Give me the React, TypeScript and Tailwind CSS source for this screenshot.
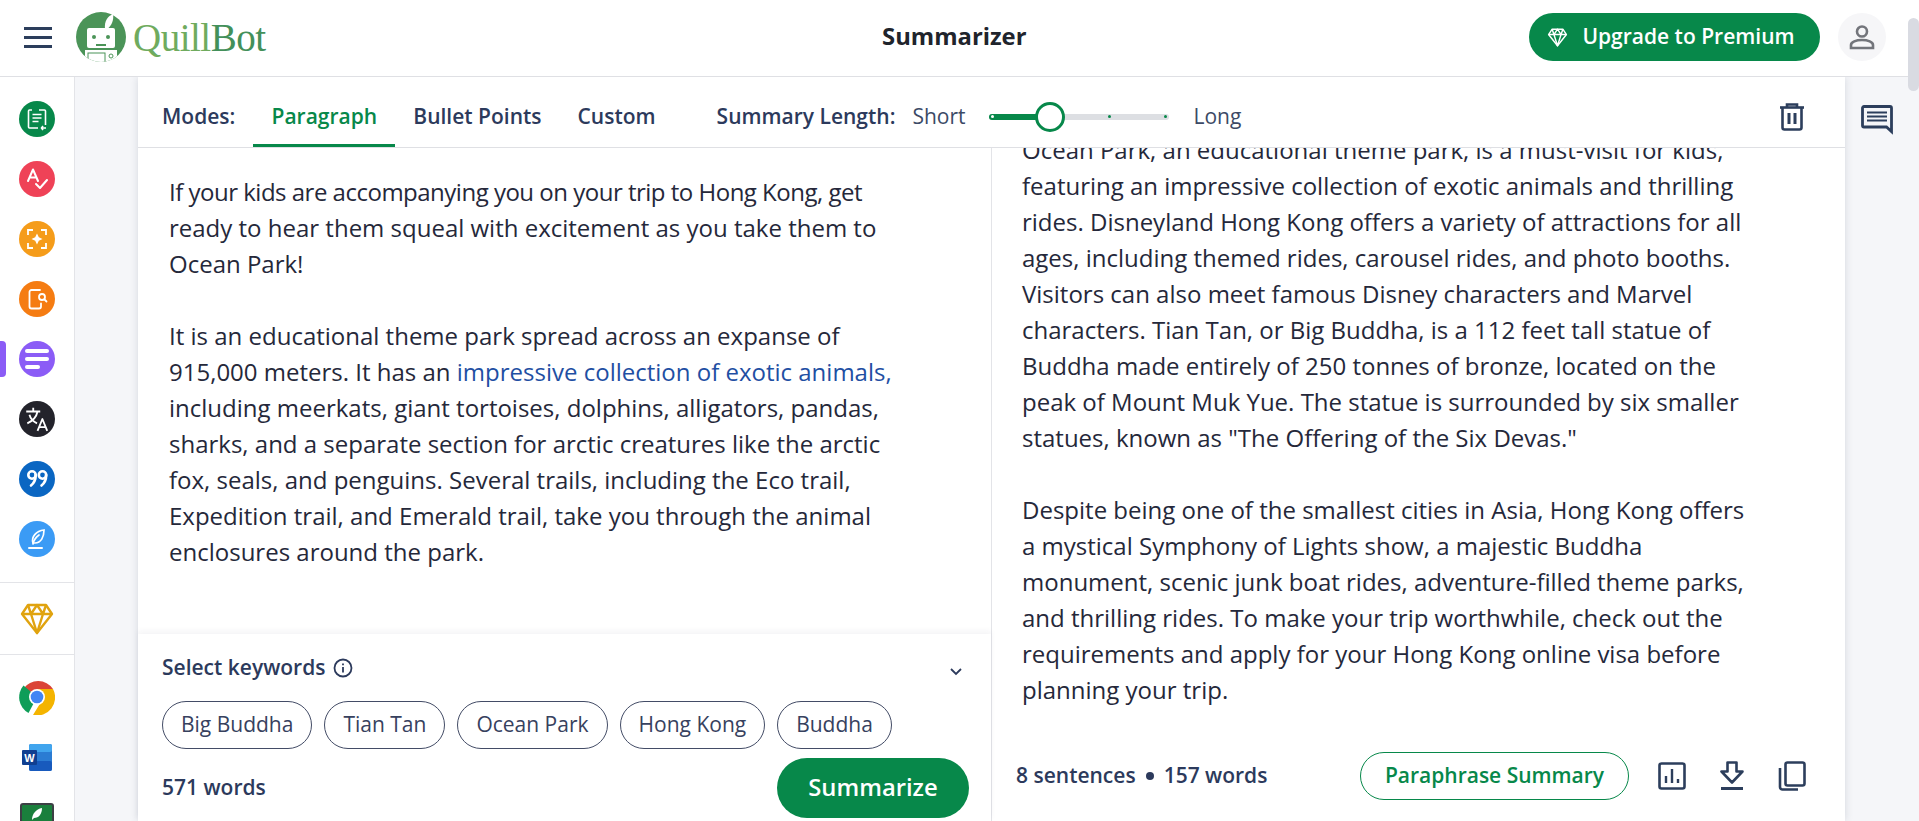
import type { ReactNode } from "react";

const GREEN = "#07884a";

function Circle({ color, children }: { color: string; children: ReactNode }) {
  return (
    <div className="flex h-9 w-9 items-center justify-center rounded-full" style={{ backgroundColor: color }}>
      {children}
    </div>
  );
}

function Logo() {
  return (
    <div className="flex items-center">
      <svg width="52" height="52" viewBox="0 0 52 52">
        <defs>
          <clipPath id="logoclip">
            <circle cx="26" cy="26" r="25" />
          </clipPath>
        </defs>
        <circle cx="26" cy="26" r="25" fill="#4b9458" />
        <path d="M30 18C29 10 33 5 38 3c1 5-1 12-6 15z" fill="#fff" />
        <rect x="12" y="17" width="28" height="20" rx="2" fill="#fff" />
        <circle cx="19" cy="26" r="2" fill="#4b9458" />
        <circle cx="33" cy="26" r="2" fill="#4b9458" />
        <g clipPath="url(#logoclip)">
          <rect x="21" y="33" width="10" height="2" fill="#4b9458" />
          <rect x="10" y="39" width="32" height="14" fill="#fff" />
          <rect x="13" y="42" width="17" height="10" fill="none" stroke="#4b9458" strokeWidth="1" />
          <circle cx="36" cy="45" r="2" fill="none" stroke="#4b9458" strokeWidth="1" />
        </g>
      </svg>
      <span className="ml-[6px] font-['Liberation_Serif',serif] text-[39px] leading-none tracking-[-0.5px]">
        <span className="text-[#6fab5e]">Quill</span>
        <span className="text-[#43905a]">Bot</span>
      </span>
    </div>
  );
}

function Sidebar() {
  return (
    <aside className="relative flex w-[75px] shrink-0 flex-col items-center border-r border-[#e3e4e8] bg-white pt-[24px]">
      {/* active marker */}
      <div className="absolute left-0 top-[264px] h-9 w-[6px] rounded-r-[4px] bg-[#8b5cf6]" />
      <div className="flex shrink-0 flex-col gap-[24px]">
        <Circle color="#07884a">
          <svg width="24" height="24" viewBox="0 0 24 24" fill="none" stroke="#fff" strokeWidth="1.6">
            <path d="M7 3H4.500a1 1 0 0 0-1 1v16a1 1 0 0 0 1 1H13M14 3h5.500a1 1 0 0 1 1 1v14" />
            <path d="M7.500 7.500h9M7.500 11h9M7.500 14.500h6" />
            <path d="M17 21h4M18 19l-1.500 2 1.500 2" />
          </svg>
        </Circle>
        <Circle color="#ef4257">
          <svg width="26" height="26" viewBox="0 0 26 26" fill="none" stroke="#fff" strokeWidth="2" strokeLinecap="round" strokeLinejoin="round">
            <path d="M4 15 9 3.500 14 15M5.500 11.500h7" />
            <path d="M12 18l4 4 7-8" />
          </svg>
        </Circle>
        <Circle color="#f59c1a">
          <svg width="24" height="24" viewBox="0 0 24 24" fill="none" stroke="#fff" strokeWidth="1.8">
            <path d="M3 8V3h5M16 3h5v5M21 16v5h-5M8 21H3v-5" />
            <path d="M12 6.500l1.800 3.700 3.700 1.800-3.700 1.800-1.800 3.700-1.800-3.700L6.500 12l3.700-1.800z" fill="#fff" stroke="none" />
          </svg>
        </Circle>
        <Circle color="#f57c12">
          <svg width="24" height="24" viewBox="0 0 24 24" fill="none" stroke="#fff" strokeWidth="1.8" strokeLinecap="round">
            <path d="M15 3H6.500a2 2 0 0 0-2 2v14.500a2 2 0 0 0 2 2h7.500a2 2 0 0 0 2-2v-3" />
            <circle cx="17" cy="10" r="3" />
            <path d="M19.500 12.500l2 2" />
          </svg>
        </Circle>
        <Circle color="#8b5cf6">
          <div className="flex w-[24px] flex-col gap-[4px]">
            <div className="h-[4px] w-[24px] rounded-full bg-white" />
            <div className="h-[4px] w-[24px] rounded-full bg-white" />
            <div className="h-[4px] w-[15px] rounded-full bg-white" />
          </div>
        </Circle>
        <Circle color="#23232b">
          <svg width="28" height="28" viewBox="0 0 26 26" fill="none" stroke="#fff" strokeWidth="1.7" strokeLinejoin="round">
            <path d="M3 6h13M9.500 2.500V6M13.500 6c-1 5-5 9-9.500 11M6 9c1 4 4 6.500 7 8" />
            <path d="M13.500 24l4.500-11 4.500 11M15 20.500h6" />
          </svg>
        </Circle>
        <Circle color="#0a66c2">
          <svg width="26" height="26" viewBox="0 0 26 26" fill="none" stroke="#fff" strokeWidth="2.600" strokeLinecap="round">
            <circle cx="8" cy="9" r="3.700" />
            <path d="M11.700 9c0 5-1.500 8-4.700 10.500" />
            <circle cx="18.500" cy="9" r="3.700" />
            <path d="M22.200 9c0 5-1.500 8-4.700 10.500" />
          </svg>
        </Circle>
        <Circle color="#3b9bf5">
          <svg width="26" height="26" viewBox="0 0 26 26" fill="none" stroke="#fff" strokeWidth="1.7" strokeLinecap="round">
            <path d="M9 17c-2-6 3-12 11-13 0 7-3 13-9 13z" />
            <path d="M9 18c1-5 3-7 6-9" />
            <path d="M5 22h13" strokeWidth="2" />
          </svg>
        </Circle>
      </div>

      <div className="mt-[25px] flex h-[73px] w-full shrink-0 items-center justify-center border-y border-[#e3e4e8]">
        <svg width="34" height="32" viewBox="0 0 34 32" fill="none" stroke="#e0a30f" strokeWidth="2.400" strokeLinejoin="round">
          <path d="M8 2h18l6 9-15 19L2 11z" />
          <path d="M2 11h30M11 11l6 19 6-19M8 2l3 9 6-9 6 9 3-9" />
        </svg>
      </div>

      <div className="mt-[24px] flex shrink-0 flex-col items-center">
        <svg width="36" height="36" viewBox="0 0 36 36">
          <path d="M18 18 4.500 9.500A18 18 0 0 1 34 10H18z" fill="#db4437" />
          <path d="M18 18 9.500 34A18 18 0 0 1 4.500 6.500z" fill="#0f9d58" />
          <path d="M18 10h16A18 18 0 0 1 14 36l8-13z" fill="#f4b400" />
          <circle cx="18" cy="18" r="8" fill="#fff" />
          <circle cx="18" cy="18" r="6.300" fill="#4285f4" />
        </svg>
        <svg className="mt-[29px]" width="30" height="27" viewBox="0 0 30 27">
          <rect x="7" y="0" width="23" height="27" rx="2" fill="#2b7cd3" />
          <rect x="7" y="0" width="23" height="8" rx="2" fill="#41a5ee" />
          <rect x="7" y="17" width="23" height="10" rx="2" fill="#185abd" />
          <rect x="0" y="6" width="15" height="15" rx="1" fill="#103f91" />
          <text x="7.500" y="17.500" textAnchor="middle" fill="#fff" fontSize="11" fontWeight="700" fontFamily="Liberation Sans, sans-serif">
            W
          </text>
        </svg>
        <div className="mt-[32px] flex h-[36px] w-[34px] items-start justify-center rounded-[3px] border-[2px] border-[#3c3f44] bg-[#1a7f3c] pt-[2px]">
          <svg width="14" height="14" viewBox="0 0 14 14" fill="#fff">
            <path d="M2 13C2 7 6 2 12 1c0 6-3 10-8 10z" />
          </svg>
        </div>
      </div>
    </aside>
  );
}

function Header() {
  return (
    <header className="relative flex h-[77px] shrink-0 items-center border-b border-[#dfe0e4] bg-white pb-[2px] pl-[24px] pr-[33px]">
      <div className="flex w-[28px] flex-col gap-[6px]">
        <div className="h-[3px] bg-[#2c3e5c]" />
        <div className="h-[3px] bg-[#2c3e5c]" />
        <div className="h-[3px] bg-[#2c3e5c]" />
      </div>
      <div className="ml-[23px]">
        <Logo />
      </div>
      <div className="flex flex-1 justify-center pl-[114px]">
        <h1 className="text-[23.800px] font-bold text-[#20242c]">Summarizer</h1>
      </div>
      <button className="flex h-[48px] w-[291px] items-center justify-center gap-[14px] rounded-full pr-[7px] text-[21px] font-semibold text-white" style={{ backgroundColor: GREEN }}>
        <svg width="21" height="19" viewBox="0 0 34 32" fill="none" stroke="#fff" strokeWidth="2.400" strokeLinejoin="round">
          <path d="M8 2h18l6 9-15 19L2 11z" />
          <path d="M2 11h30M11 11l6 19 6-19M8 2l3 9 6-9 6 9 3-9" />
        </svg>
        Upgrade to Premium
      </button>
      <div className="ml-[18px] flex h-[48px] w-[48px] items-center justify-center rounded-full bg-[#f6f6f8]">
        <svg width="26" height="26" viewBox="0 0 26 26" fill="none" stroke="#73757b" strokeWidth="2.600">
          <circle cx="13" cy="7.500" r="5" />
          <path d="M2 24v-3c0-3 5-5 11-5s11 2 11 5v3z" />
        </svg>
      </div>
    </header>
  );
}

function Slider() {
  return (
    <div className="relative h-[6px] w-[180px] rounded-full bg-[#dddfe3]">
      <div className="h-[6px] w-[60px] rounded-full" style={{ backgroundColor: GREEN }} />
      <div className="absolute left-[2px] top-[1.500px] h-[3px] w-[3px] rounded-full bg-white" />
      <div className="absolute left-[119px] top-[1.500px] h-[3px] w-[3px] rounded-full bg-[#07884a]" />
      <div className="absolute left-[175px] top-[1.500px] h-[3px] w-[3px] rounded-full bg-[#07884a]" />
      <div className="absolute left-[46px] top-[-12px] h-[30px] w-[30px] rounded-full border-[3px] border-[#07884a] bg-white" />
    </div>
  );
}

function Toolbar() {
  return (
    <div className="flex h-[71px] shrink-0 items-stretch border-b border-[#dfe0e4] pl-[24px] text-[21px]">
      <span className="flex items-center pt-[9px] font-semibold text-[#2c3a5c]">Modes:</span>
      <span className="ml-[18px] flex w-[142px] items-center justify-center border-b-[3px] border-[#07884a] pt-[12px] font-semibold text-[#07884a]">Paragraph</span>
      <span className="ml-[18px] flex items-center pt-[9px] font-semibold text-[#2c3a5c]">Bullet Points</span>
      <span className="ml-[36px] flex items-center pt-[9px] font-semibold text-[#2c3a5c]">Custom</span>
      <span className="ml-[61px] flex items-center pt-[9px] font-semibold text-[#2c3a5c]">Summary Length:</span>
      <span className="ml-[17px] flex items-center pt-[9px] text-[#3c4a66]">Short</span>
      <div className="ml-[23px] flex items-center pt-[9px]">
        <Slider />
      </div>
      <span className="ml-[25px] flex items-center pt-[9px] text-[#3c4a66]">Long</span>
      <div className="flex flex-1 items-center justify-end pr-[40px] pt-[9px]">
        <svg width="26" height="28" viewBox="0 0 26 28" fill="none" stroke="#2c3e5c" strokeWidth="2.600">
          <path d="M1 4.500h24" />
          <path d="M8 4V1.500h10V4" />
          <path d="M3.500 5v19.500a2 2 0 0 0 2 2h15a2 2 0 0 0 2-2V5" />
          <path d="M10 10v11M16 10v11" strokeWidth="3" />
        </svg>
      </div>
    </div>
  );
}

const chips = ["Big Buddha", "Tian Tan", "Ocean Park", "Hong Kong", "Buddha"];

function LeftPane() {
  return (
    <section className="flex w-[854px] shrink-0 flex-col border-r border-[#e3e4e8]">
      <div className="flex-1 whitespace-nowrap pl-[31px] pt-[26px] text-[24px] leading-[36px] text-[#25283a]">
        <p className="mb-[36px]">
          <span className="tracking-[-0.5px]">If your kids are accompanying you on your trip to Hong Kong, get</span>
          <br />
          ready to hear them squeal with excitement as you take them to
          <br />
          Ocean Park!
        </p>
        <p>
          It is an educational theme park spread across an expanse of
          <br />
          915,000 meters. It has an <span className="text-[#1f4fa3]">impressive collection of exotic animals,</span>
          <br />
          including meerkats, giant tortoises, dolphins, alligators, pandas,
          <br />
          sharks, and a separate section for arctic creatures like the arctic
          <br />
          fox, seals, and penguins. Several trails, including the Eco trail,
          <br />
          Expedition trail, and Emerald trail, take you through the animal
          <br />
          enclosures around the park.
        </p>
      </div>
      <div className="h-[187px] shrink-0 bg-white pl-[24px] pr-[22px] pt-[20px] shadow-[0_-3px_6px_rgba(30,40,70,0.05)]">
        <div className="flex h-[28px] items-center justify-between text-[#2c3a5c]">
          <div className="flex items-center gap-[8px]">
            <span className="text-[21px] font-semibold">Select keywords</span>
            <svg width="20" height="20" viewBox="0 0 20 20" fill="none" stroke="#2c3a5c" strokeWidth="1.800">
              <circle cx="10" cy="10" r="8.500" />
              <path d="M10 9v5.500M10 5.500v1.800" />
            </svg>
          </div>
          <svg className="mr-[6px] mt-[6px]" width="14" height="9" viewBox="0 0 14 9" fill="none" stroke="#2c3a5c" strokeWidth="1.800">
            <path d="M2 2l5 5 5-5" />
          </svg>
        </div>
        <div className="mt-[19px] flex gap-[12px]">
          {chips.map((c) => (
            <span key={c} className="flex h-[48px] items-center rounded-full border border-[#434c66] px-[18px] text-[21px] text-[#37415e]">
              {c}
            </span>
          ))}
        </div>
        <div className="mt-[9px] flex items-center justify-between">
          <span className="text-[21px] font-semibold text-[#2c3a5c]">571 words</span>
          <button className="h-[60px] w-[192px] rounded-full text-[23.800px] font-semibold text-white" style={{ backgroundColor: GREEN }}>
            Summarize
          </button>
        </div>
      </div>
    </section>
  );
}

function RightPane() {
  return (
    <section className="flex min-w-0 flex-1 flex-col">
      <div className="flex-1 overflow-hidden whitespace-nowrap pl-[30px] text-[24px] leading-[36px] text-[#25283a]">
        <div className="mt-[-16px]">
          <p className="mb-[36px]">
            Ocean Park, an educational theme park, is a must-visit for kids,
            <br />
            featuring an impressive collection of exotic animals and thrilling
            <br />
            rides. Disneyland Hong Kong offers a variety of attractions for all
            <br />
            ages, including themed rides, carousel rides, and photo booths.
            <br />
            Visitors can also meet famous Disney characters and Marvel
            <br />
            characters. Tian Tan, or Big Buddha, is a 112 feet tall statue of
            <br />
            Buddha made entirely of 250 tonnes of bronze, located on the
            <br />
            peak of Mount Muk Yue. The statue is surrounded by six smaller
            <br />
            statues, known as "The Offering of the Six Devas."
          </p>
          <p>
            Despite being one of the smallest cities in Asia, Hong Kong offers
            <br />
            a mystical Symphony of Lights show, a majestic Buddha
            <br />
            monument, scenic junk boat rides, adventure-filled theme parks,
            <br />
            and thrilling rides. To make your trip worthwhile, check out the
            <br />
            requirements and apply for your Hong Kong online visa before
            <br />
            planning your trip.
          </p>
        </div>
      </div>
      <div className="flex h-[89px] shrink-0 items-start pl-[24px] pr-[39px] pt-[20px]">
        <div className="flex h-[48px] items-center gap-[10px] text-[21px] font-semibold text-[#2c3a5c]">
          <span>8 sentences</span>
          <span className="h-[8px] w-[8px] rounded-full bg-[#2c3a5c]" />
          <span>157 words</span>
        </div>
        <div className="flex-1" />
        <button className="h-[48px] w-[269px] rounded-full border border-[#07884a] text-[21px] font-semibold text-[#07884a]">
          Paraphrase Summary
        </button>
        <div className="ml-[29px] flex h-[48px] items-center gap-[32px]">
          <svg width="28" height="28" viewBox="0 0 28 28" fill="none" stroke="#2c3e5c" strokeWidth="2.600">
            <rect x="1.500" y="1.500" width="25" height="25" rx="2" />
            <path d="M8 21v-7M14 21V7M20 21v-4" strokeWidth="2.400" />
          </svg>
          <svg width="28" height="30" viewBox="0 0 28 30" fill="none" stroke="#2c3e5c" strokeWidth="2.600">
            <path d="M9.500 1.500h9v9h6L14 21.500 3.500 10.500h6z" strokeLinejoin="round" />
            <path d="M3 27.500h22" strokeWidth="3" />
          </svg>
          <svg width="28" height="30" viewBox="0 0 28 30" fill="none" stroke="#2c3e5c" strokeWidth="2.600">
            <rect x="7.500" y="1.500" width="19" height="23" rx="2" />
            <path d="M2 7v19a2.500 2.500 0 0 0 2.500 2.500H20" />
          </svg>
        </div>
      </div>
    </section>
  );
}

export default function App() {
  return (
    <div className="flex h-[821px] w-full flex-col overflow-hidden bg-white font-['Open_Sans',sans-serif]">
      <Header />
      <div className="flex min-h-0 flex-1">
        <Sidebar />
        <div className="flex min-w-0 flex-1 bg-[#f5f6f9]">
          <div className="ml-[63px] flex min-w-0 flex-1 flex-col bg-white shadow-[0_0_8px_rgba(30,40,70,0.15)]">
            <Toolbar />
            <div className="flex min-h-0 flex-1">
              <LeftPane />
              <RightPane />
            </div>
          </div>
          <div className="flex w-[63px] shrink-0 justify-center pt-[28px]">
            <svg width="32" height="30" viewBox="0 0 32 30" fill="none" stroke="#2c3e5c" strokeWidth="2.800">
              <path d="M3 1.500h26a1.500 1.500 0 0 1 1.500 1.500v23.500l-5-4.500H3A1.500 1.500 0 0 1 1.500 20.500V3A1.500 1.500 0 0 1 3 1.500z" />
              <path d="M6 7.500h20M6 11.500h20M6 15.500h20" strokeWidth="2.200" />
            </svg>
          </div>
          {/* page scrollbar */}
          <div className="w-[11px] shrink-0" />
        </div>
      </div>
      <div className="absolute right-0 top-[18px] h-[73px] w-[11px] rounded-full bg-[#d9dbe2]" />
    </div>
  );
}
